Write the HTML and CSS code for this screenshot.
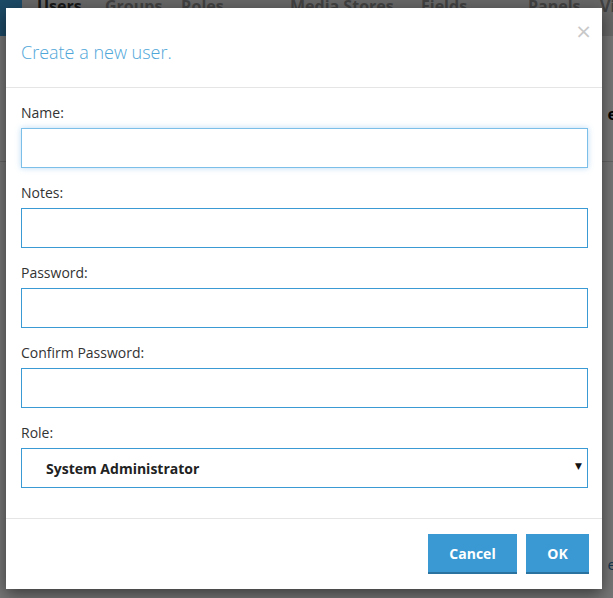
FILE: index.html
```html
<!DOCTYPE html>
<html>
<head>
<meta charset="utf-8">
<link rel="stylesheet" href="styles.css">
</head>
<body>
<div class="page">
  <div class="topbar">
    <div class="brand"></div>
    <nav class="tabs">
      <span class="tab active">Users</span>
      <span class="tab">Groups</span>
      <span class="tab">Roles</span>
      <span class="tab">Media Stores</span>
      <span class="tab">Fields</span>
      <span class="tab">Panels</span>
      <span class="tab">Views</span>
    </nav>
  </div>
  <div class="content">
    <div class="row-head"><span class="peek-bold">e</span></div>
    <div class="row-line"></div>
    <div class="spacer"></div>
    <div class="row-foot"><span class="peek-link">e</span></div>
  </div>
</div>
<div class="overlay"></div>
<div class="modal">
  <div class="modal-header">
    <span class="close">&times;</span>
    <h4 class="modal-title">Create a new user.</h4>
  </div>
  <div class="modal-body">
    <div class="group">
      <label class="lbl">Name:</label>
      <div class="field focused"></div>
    </div>
    <div class="group">
      <label class="lbl">Notes:</label>
      <div class="field"></div>
    </div>
    <div class="group">
      <label class="lbl">Password:</label>
      <div class="field"></div>
    </div>
    <div class="group">
      <label class="lbl">Confirm Password:</label>
      <div class="field"></div>
    </div>
    <div class="group">
      <label class="lbl">Role:</label>
      <div class="field select"><span class="sel-text">System Administrator</span><span class="caret">&#9660;</span></div>
    </div>
  </div>
  <div class="modal-footer">
    <button class="btn cancel">Cancel</button>
    <button class="btn ok">OK</button>
  </div>
</div>
</body>
</html>
```
FILE: styles.css
```css
html, body {
  margin: 0;
  padding: 0;
  height: 100%;
  overflow: hidden;
}
body {
  font-family: "Open Sans", "Noto Sans", sans-serif;
  background: #f0f0f0;
  color: #333;
}
.page {
  height: 598px;
  display: flex;
  flex-direction: column;
}
.topbar {
  height: 36px;
  background: #d8d8d8;
  display: flex;
}
.brand {
  width: 22px;
  flex-shrink: 0;
  background: #3d9bd6;
}
.tabs {
  display: flex;
  align-items: flex-start;
  padding-left: 15px;
  overflow: hidden;
  white-space: nowrap;
}
.tab {
  flex-shrink: 0;
  font-size: 16px;
  font-weight: 700;
  color: #888;
  margin-top: -5px;
}
.tab:nth-child(1) { width: 68px; color: #333; }
.tab:nth-child(2) { width: 76px; }
.tab:nth-child(3) { width: 109px; }
.tab:nth-child(4) { width: 131px; }
.tab:nth-child(5) { width: 107px; }
.tab:nth-child(6) { width: 72px; }
.content {
  flex: 1;
  background: #f6f6f6;
  display: flex;
  flex-direction: column;
}
.row-head {
  height: 125px;
  display: flex;
  justify-content: flex-end;
  align-items: flex-end;
}
.peek-bold {
  font-weight: 700;
  font-size: 16px;
  color: #000;
  margin-right: -4px;
  margin-bottom: 36px;
}
.row-line {
  height: 1px;
  background: #d0d0d0;
}
.spacer { flex: 1; }
.row-foot {
  height: 44px;
  display: flex;
  justify-content: flex-end;
}
.peek-link {
  font-size: 15px;
  color: #2a6fa8;
  margin-right: -3px;
}
.overlay {
  position: absolute;
  inset: 0;
  background: rgba(0, 0, 0, 0.52);
}
.modal {
  position: absolute;
  left: 6px;
  top: 8px;
  width: 596px;
  height: 581px;
  background: #fff;
  box-shadow: 0 5px 15px rgba(0, 0, 0, 0.5);
  display: flex;
  flex-direction: column;
}
.modal-header {
  position: relative;
  padding: 32px 15px 22px;
  border-bottom: 1px solid #e5e5e5;
}
.modal-title {
  margin: 0;
  font-size: 18px;
  line-height: 25px;
  font-weight: 300;
  color: #4ea6d9;
}
.close {
  position: absolute;
  right: 10px;
  top: 13px;
  font-size: 20px;
  line-height: 20px;
  color: #c8c8c8;
  font-family: "DejaVu Sans", sans-serif;
}
.modal-body {
  padding: 15px 15px 15px 15px;
  flex: 1;
}
.group {
  margin-bottom: 15px;
  display: flex;
  flex-direction: column;
}
.lbl {
  font-size: 14px;
  line-height: 20px;
  margin-bottom: 5px;
  color: #333;
}
.field {
  height: 40px;
  box-sizing: border-box;
  border: 1px solid #3a9ad3;
  background: #fff;
  margin-right: -1px;
}
.field.focused {
  border-color: #7cc0ea;
  box-shadow: 0 0 6px rgba(102, 175, 233, 0.45);
}
.select {
  display: flex;
  align-items: center;
  justify-content: space-between;
  padding: 0 5px 0 24px;
}
.sel-text {
  font-size: 14px;
  font-weight: 700;
  color: #222;
}
.caret {
  font-size: 9px;
  color: #111;
  margin-top: -4px;
  font-family: "DejaVu Sans", sans-serif;
}
.modal-footer {
  border-top: 1px solid #e5e5e5;
  padding: 15px 13px 15px 15px;
  display: flex;
  justify-content: flex-end;
  gap: 9px;
}
.btn {
  height: 40px;
  box-sizing: border-box;
  border: none;
  border-bottom: 2px solid #2a72a0;
  background: #3a99d2;
  color: #fff;
  font-family: "Open Sans", "Noto Sans", sans-serif;
  font-weight: 700;
  font-size: 14px;
  padding: 0;
  margin: 0;
}
.btn.cancel { width: 89px; }
.btn.ok { width: 63px; }
```
